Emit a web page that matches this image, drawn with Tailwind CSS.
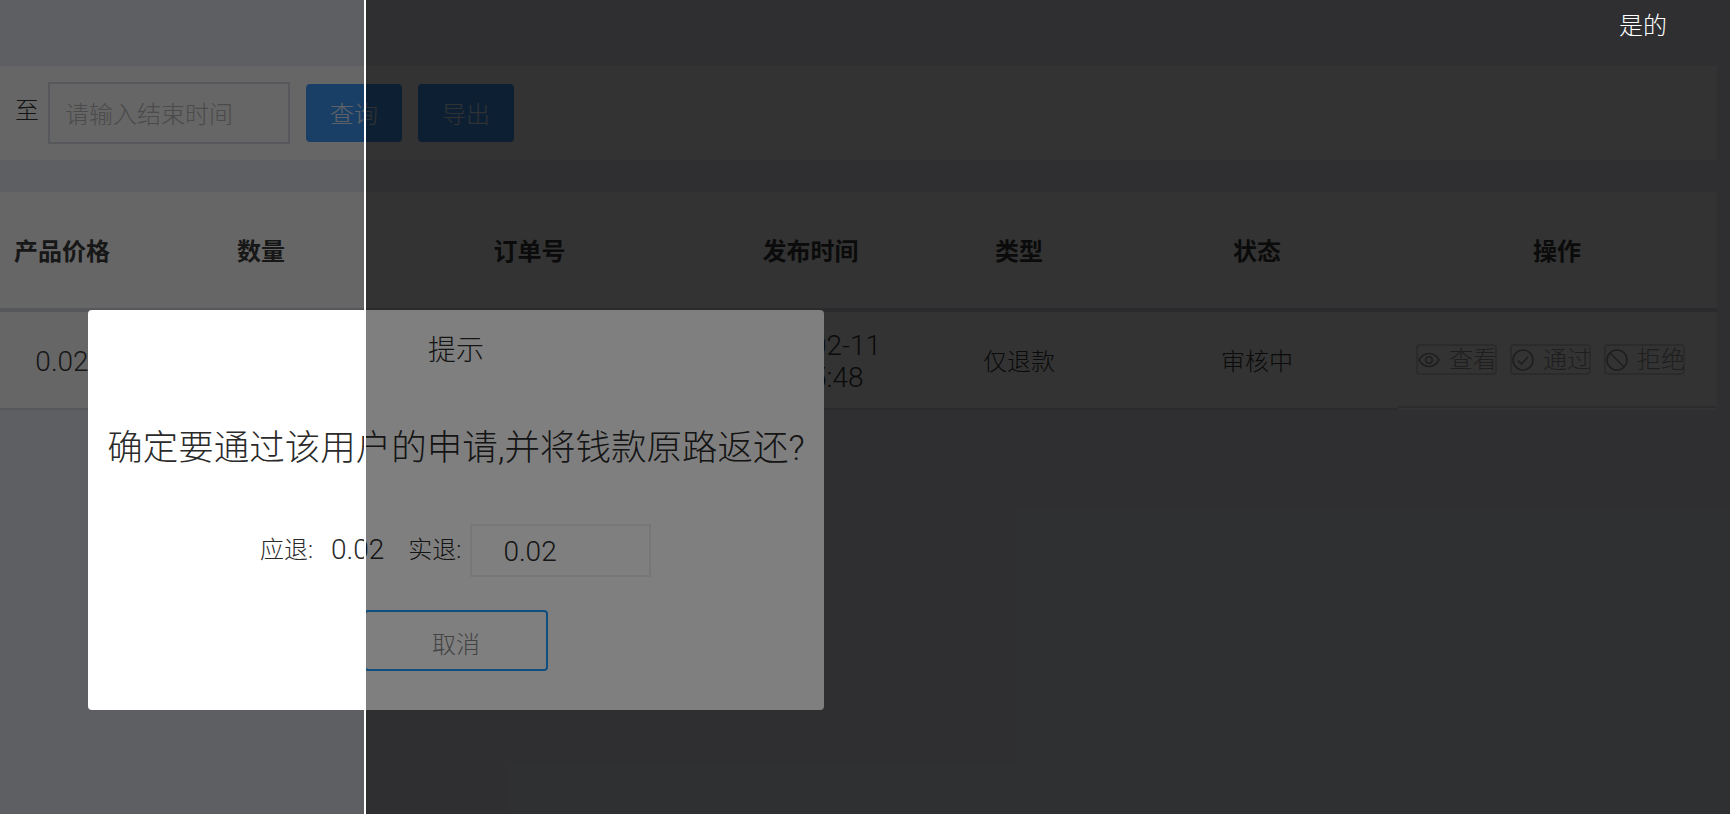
<!DOCTYPE html>
<html lang="zh-CN">
  <head>
    <meta charset="utf-8">
    <meta name="viewport" content="width=device-width, initial-scale=1">
    <title>退款审核</title>
    <script src="https://cdn.jsdelivr.net/npm/@tailwindcss/browser@4"></script>
  </head>
  <body class="bg-[#ebeef4]">
    <div class="relative h-[814px] w-[1730px] overflow-hidden font-['Roboto','Noto_Sans_CJK_SC',sans-serif] text-[24px] font-light text-[#3a3a3a]">
      <!-- page under the dialog -->
      <div class="h-[66px]"></div>

      <div class="flex h-[94px] w-[1717px] items-center bg-white pl-[15px]">
        <span class="mb-[4px] w-[33px] text-[#333]">至</span>
        <div class="flex h-[62px] w-[242px] items-center border-2 border-[#d6dce6] pl-[15px] pt-1 text-[#bbb]">请输入结束时间</div>
        <button type="button" class="ml-4 h-[58px] w-[96px] rounded bg-[#409eff] pt-1 text-white/90">查询</button>
        <button type="button" class="ml-4 h-[58px] w-[96px] rounded bg-[#409eff] pt-1 text-white/90">导出</button>
      </div>

      <div class="mt-8 w-[1717px] overflow-hidden bg-white">
        <div class="ml-[-42px] grid h-[116px] grid-cols-[208px_190px_347px_219px_194px_282px_318px] items-center pt-1 text-center font-bold text-[#3a3a3a]">
          <div>产品价格</div>
          <div>数量</div>
          <div>订单号</div>
          <div class="pr-1">发布时间</div>
          <div>类型</div>
          <div>状态</div>
          <div>操作</div>
        </div>
        <div class="h-1 bg-[#d8dae0]"></div>
        <div class="ml-[-42px] grid h-[98px] grid-cols-[208px_190px_347px_219px_194px_282px_318px] text-center">
          <div class="flex items-center justify-center border-b-2 border-[#d8dae0] pt-[4px] text-[28px]">0.02</div>
          <div class="border-b-2 border-[#d8dae0]"></div>
          <div class="border-b-2 border-[#d8dae0]"></div>
          <div class="flex flex-col items-center justify-center border-b-2 border-[#d8dae0] pr-[3px] pt-[3px] text-[28px] leading-8">
            <span>2021-02-11</span>
            <span>16:05:48</span>
          </div>
          <div class="flex items-center justify-center border-b-2 border-[#d8dae0] pt-[4px]">仅退款</div>
          <div class="flex items-center justify-center border-b-2 border-[#d8dae0] pt-[4px]">审核中</div>
          <div class="mb-[2px] flex items-center gap-[13px] whitespace-nowrap border-b-2 border-[#d8dae0] pl-[18px] pt-[1px] text-[#999]">
            <button type="button" class="flex h-[31px] w-[81px] items-center gap-[9px] rounded-sm border-2 border-[#d8d8d8]">
              <svg class="size-[22px] shrink-0" viewBox="0 0 22 22" fill="none" stroke="currentColor" stroke-width="1.6"><path d="M1 11c2.600-4.400 6-6.500 10-6.500s7.400 2.100 10 6.500c-2.600 4.400-6 6.500-10 6.500S3.600 15.400 1 11z"/><circle cx="11" cy="11" r="3.200"/></svg>
              查看
            </button>
            <button type="button" class="flex h-[31px] w-[81px] items-center gap-[9px] rounded-sm border-2 border-[#d8d8d8]">
              <svg class="size-[22px] shrink-0" viewBox="0 0 22 22" fill="none" stroke="currentColor" stroke-width="1.6"><circle cx="11" cy="11" r="10"/><path d="M6 11.500l3.500 3.500 6.500-7"/></svg>
              通过
            </button>
            <button type="button" class="flex h-[31px] w-[81px] items-center gap-[9px] rounded-sm border-2 border-[#d8d8d8]">
              <svg class="size-[22px] shrink-0" viewBox="0 0 22 22" fill="none" stroke="currentColor" stroke-width="1.6"><circle cx="11" cy="11" r="10"/><path d="M4 4l14 14"/></svg>
              拒绝
            </button>
          </div>
        </div>
      </div>

      <!-- modal mask and dialog -->
      <div class="absolute inset-0 bg-black/60"></div>
      <div class="absolute left-[88px] top-[310px] flex h-[400px] w-[736px] flex-col items-center rounded bg-white text-[#2a2a2a]">
        <div class="mt-[23px] text-[28px] leading-9">提示</div>
        <div class="mt-[55px] whitespace-nowrap text-[35.500px] leading-[48px]">确定要通过该用户的申请,并将钱款原路返还?</div>
        <div class="mt-[52px] flex h-[53px] items-center self-start pl-[172px]">
          <span class="mb-[2px]">应退:</span>
          <span class="mb-[2px] ml-[18px] text-[28px]">0.02</span>
          <span class="mb-[2px] ml-[24px]">实退:</span>
          <div class="ml-[9px] flex h-[53px] w-[181px] items-center border-2 border-[#eee] pl-[31px] pt-[3px] text-[28px]">0.02</div>
        </div>
        <button type="button" class="mt-[33px] h-[61px] w-[184px] rounded-sm border-2 border-[#1e9fff] pt-2 text-[#888]">取消</button>
      </div>

      <!-- darker half and the split line -->
      <div class="absolute inset-y-0 left-[366px] right-0 bg-black/50"></div>
      <div class="absolute inset-y-0 left-[364px] w-[2px] bg-white"></div>
      <div class="absolute left-[1619px] top-[11px] leading-[30px] text-white">是的</div>
    </div>
  </body>
</html>
